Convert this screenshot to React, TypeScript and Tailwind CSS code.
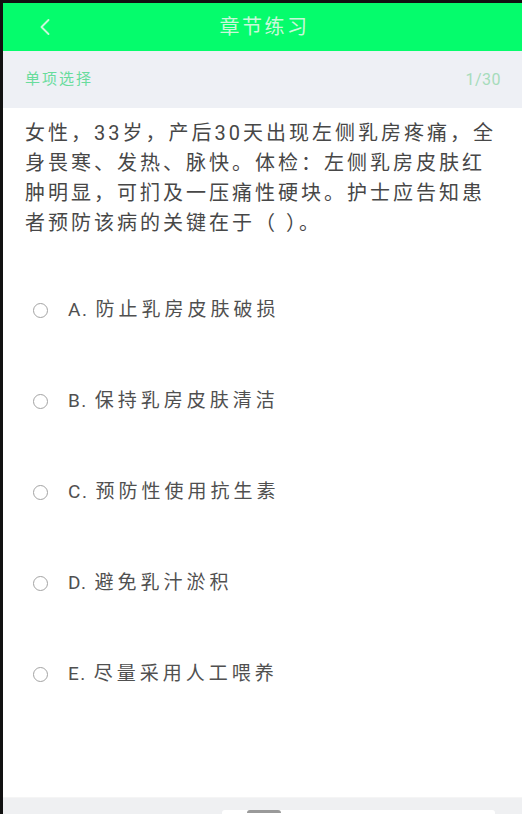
import { ChevronLeft } from 'lucide-react';

const options = [
  { key: 'A', text: '防止乳房皮肤破损' },
  { key: 'B', text: '保持乳房皮肤清洁' },
  { key: 'C', text: '预防性使用抗生素' },
  { key: 'D', text: '避免乳汁淤积' },
  { key: 'E', text: '尽量采用人工喂养' },
];

export default function App() {
  return (
    <div
      className="h-[814px] w-[522px] flex flex-col bg-[#111] pt-[3px] pl-[3px] overflow-hidden"
      style={{ fontFamily: 'Roboto, "Noto Sans CJK SC", sans-serif' }}
    >
      <div className="flex-1 flex flex-col bg-white">
        {/* Header */}
        <div className="h-[48px] shrink-0 bg-[#05fc6c] flex items-center relative">
          <ChevronLeft className="absolute left-[28px] w-[28px] h-[28px] text-[#c9f8da]" strokeWidth={1.6} />
          <h1 className="flex-1 text-center text-[20px] tracking-[2.5px] text-[#c9f8da] pl-[4px]">章节练习</h1>
        </div>

        {/* Sub header */}
        <div className="h-[57px] shrink-0 bg-[#eef0f5] flex items-center justify-between pl-[22px] pr-[21px]">
          <span className="text-[15px] tracking-[2px] text-[#68dc9c]">单项选择</span>
          <span className="text-[16px] tracking-[0.5px] text-[#a6dcbb]">1/30</span>
        </div>

        {/* Question */}
        <p className="w-[502px] pl-[22px] pt-[10px] text-[20px] leading-[30px] tracking-[3px] text-[#474747]">
          女性，33岁，产后30天出现左侧乳房疼痛，全身畏寒、发热、脉快。体检：左侧乳房皮肤红肿明显，可扪及一压痛性硬块。护士应告知患者预防该病的关键在于（ ）。
        </p>

        {/* Options */}
        <div className="mt-[27px] flex flex-col">
          {options.map((o) => (
            <div key={o.key} className="h-[91px] flex items-center pl-[30px]">
              <span className="w-[15px] h-[15px] rounded-full border-[1.5px] border-[#a3a3a3] shrink-0" />
              <span className="ml-[20px] text-[19px] text-[#505050]">
                <span className="tracking-[1.5px]">{o.key}.</span>
                <span className="ml-[7px] tracking-[4px]">{o.text}</span>
              </span>
            </div>
          ))}
        </div>

        <div className="flex-1" />

        {/* Bottom bar */}
        <div className="h-[17px] shrink-0 bg-[#eff0f2] border-t border-[#f5f5f5] flex flex-col justify-end">
          <div className="ml-[219px] w-[273px] h-[4px] bg-white rounded-t-[3px] flex">
            <div className="ml-[25px] w-[34px] h-[3px] rounded-t-full bg-[#9a9a9a]" />
          </div>
        </div>
      </div>
    </div>
  );
}
